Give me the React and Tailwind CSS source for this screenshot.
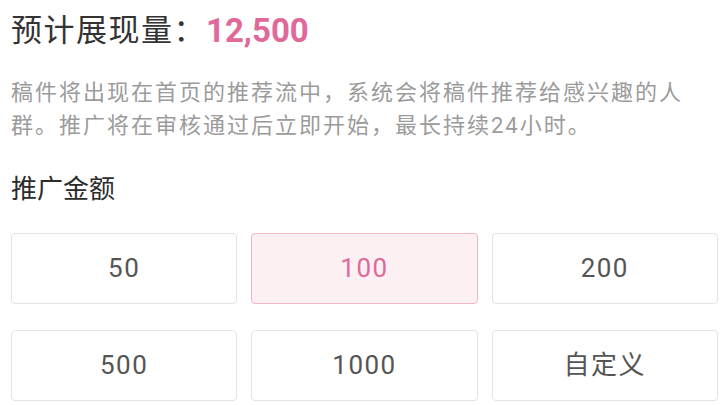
import { useState } from "react";

const AMOUNTS = ["50", "100", "200", "500", "1000", "自定义"];

export default function App() {
  const [selected, setSelected] = useState("100");

  return (
    <div className="w-[720px] h-[405px] overflow-hidden bg-white pl-[11px] pr-[2px] font-['Roboto','Noto_Sans_CJK_SC',sans-serif]">
      {/* headline */}
      <div className="pt-[11px] flex items-center h-[51px] leading-[40px]">
        <span className="text-[31px] tracking-[1.5px] text-[#333333]">预计展现量：</span>
        <span className="text-[33px] font-bold text-[#e0699a]">12,500</span>
      </div>

      <p className="mt-[25px] max-w-[685px] text-[22px] leading-[33px] tracking-[2px] text-[#9b9b9b]">
        稿件将出现在首页的推荐流中，系统会将稿件推荐给感兴趣的人群。推广将在审核通过后立即开始，最长持续24小时。
      </p>

      <h2 className="mt-[30px] text-[26px] leading-[34px] text-[#2b2b2b]">推广金额</h2>

      <div className="mt-[27px] grid grid-cols-3 gap-x-[14px] gap-y-[26px]">
        {AMOUNTS.map((a) => {
          const active = a === selected;
          return (
            <button
              key={a}
              onClick={() => setSelected(a)}
              className={
                active
                  ? "h-[71px] rounded-[4px] border border-[#f2b6c9] bg-[#fdf0f3] text-[26px] tracking-[1.5px] text-[#e0699a]"
                  : "h-[71px] rounded-[4px] border border-[#e3e3e3] bg-white text-[26px] tracking-[1.5px] text-[#555555]"
              }
            >
              {a}
            </button>
          );
        })}
      </div>
    </div>
  );
}
